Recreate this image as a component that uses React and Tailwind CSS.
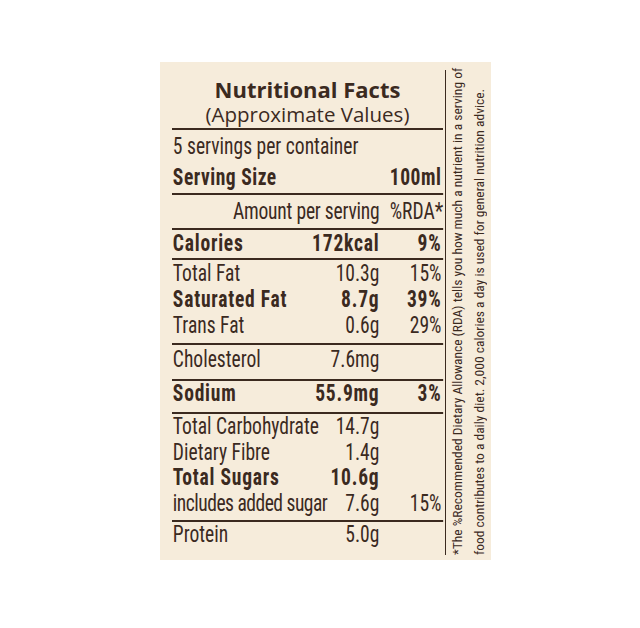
import React from 'react';

const ink = 'text-[#3b2a1f]';

const Rule = () => <div className="h-[2px] bg-[#3b2a1f]" />;

const Row = ({ label, value, pct, bold, h = 'h-[26px]' }) => (
  <div className={`flex items-center pl-[1px] ${h} ${bold ? 'font-bold tracking-[0.9px]' : 'font-normal'}`}>
    <span className="flex-1 whitespace-nowrap">{label}</span>
    <span className="text-right whitespace-nowrap">{value}</span>
    <span className="w-[75px] text-right pr-[2px] whitespace-nowrap">{pct}</span>
  </div>
);

const App = () => {
  return (
    <div className="w-[640px] h-[628px] bg-white pt-[62px] pl-[160px]">
      <div className={`w-[331px] h-[498px] bg-[#f6ecdb] flex ${ink}`}>
        <div className="w-[271px] ml-[12px] flex flex-col">
          <div className="pt-[14px] pb-[1px] text-center font-['Open_Sans',sans-serif]">
            <h1 className="text-[22px] leading-[26px] font-bold">Nutritional Facts</h1>
            <p className="text-[20.5px] leading-[25px] font-normal">(Approximate Values)</p>
          </div>
          <Rule />

          <div className="w-[319px] origin-left scale-x-[0.85] font-['Roboto_Condensed',sans-serif] text-[23px] leading-[26px]">
            <div className="h-[33px] flex items-center pl-[1px] whitespace-nowrap">5 servings per container</div>
            <div className="h-[30px] flex items-center justify-between pl-[1px] pr-[2px] font-bold tracking-[0.6px]">
              <span>Serving Size</span>
              <span>100ml</span>
            </div>
            <Rule />
            <div className="h-[33px] flex items-center justify-end gap-[12px] whitespace-nowrap">
              <span className="tracking-[-0.25px]">Amount per serving</span>
              <span>%RDA*</span>
            </div>
            <Rule />
            <Row label="Calories" value="172kcal" pct="9%" bold h="h-[28px]" />
            <Rule />
            <Row label="Total Fat" value="10.3g" pct="15%" h="h-[27px]" />
            <Row label="Saturated Fat" value="8.7g" pct="39%" bold />
            <Row label="Trans Fat" value="0.6g" pct="29%" h="h-[30px] pb-[4px]" />
            <Rule />
            <Row label="Cholesterol" value="7.6mg" pct="" h="h-[34px] pb-[4px]" />
            <Rule />
            <Row label="Sodium" value="55.9mg" pct="3%" bold h="h-[31px] pb-[5px]" />
            <Rule />
            <Row label="Total Carbohydrate" value="14.7g" pct="" />
            <Row label="Dietary Fibre" value="1.4g" pct="" h="h-[25px]" />
            <div className="flex items-center pl-[1px] h-[26px] font-bold tracking-[0.9px]">
              <span className="flex-1">Total Sugars</span>
              <span className="text-right">10.6g</span>
              <span className="w-[75px]" />
            </div>
            <div className="flex items-center pl-[1px] h-[29px] pb-[3px]">
              <span className="flex-1 whitespace-nowrap tracking-[-0.6px]">includes added sugar</span>
              <span className="text-right">7.6g</span>
              <span className="w-[75px] text-right pr-[2px]">15%</span>
            </div>
            <Rule />
            <Row label="Protein" value="5.0g" pct="" />
          </div>
        </div>

        <div className="mt-[8px] mb-[5px] ml-[2px] border-l border-[#3b2a1f] flex-1 flex justify-start">
          <div className="[writing-mode:vertical-rl] rotate-180 font-['Roboto_Condensed',sans-serif] text-[13.5px] leading-[22px] whitespace-nowrap">
            <span className="block">*The %Recommended Dietary Allowance (RDA) tells you how much a nutrient in a serving of</span>
            <span className="block">food contributes to a daily diet. 2,000 calories a day is used for general nutrition advice.</span>
          </div>
        </div>
      </div>
    </div>
  );
};

export default App;
